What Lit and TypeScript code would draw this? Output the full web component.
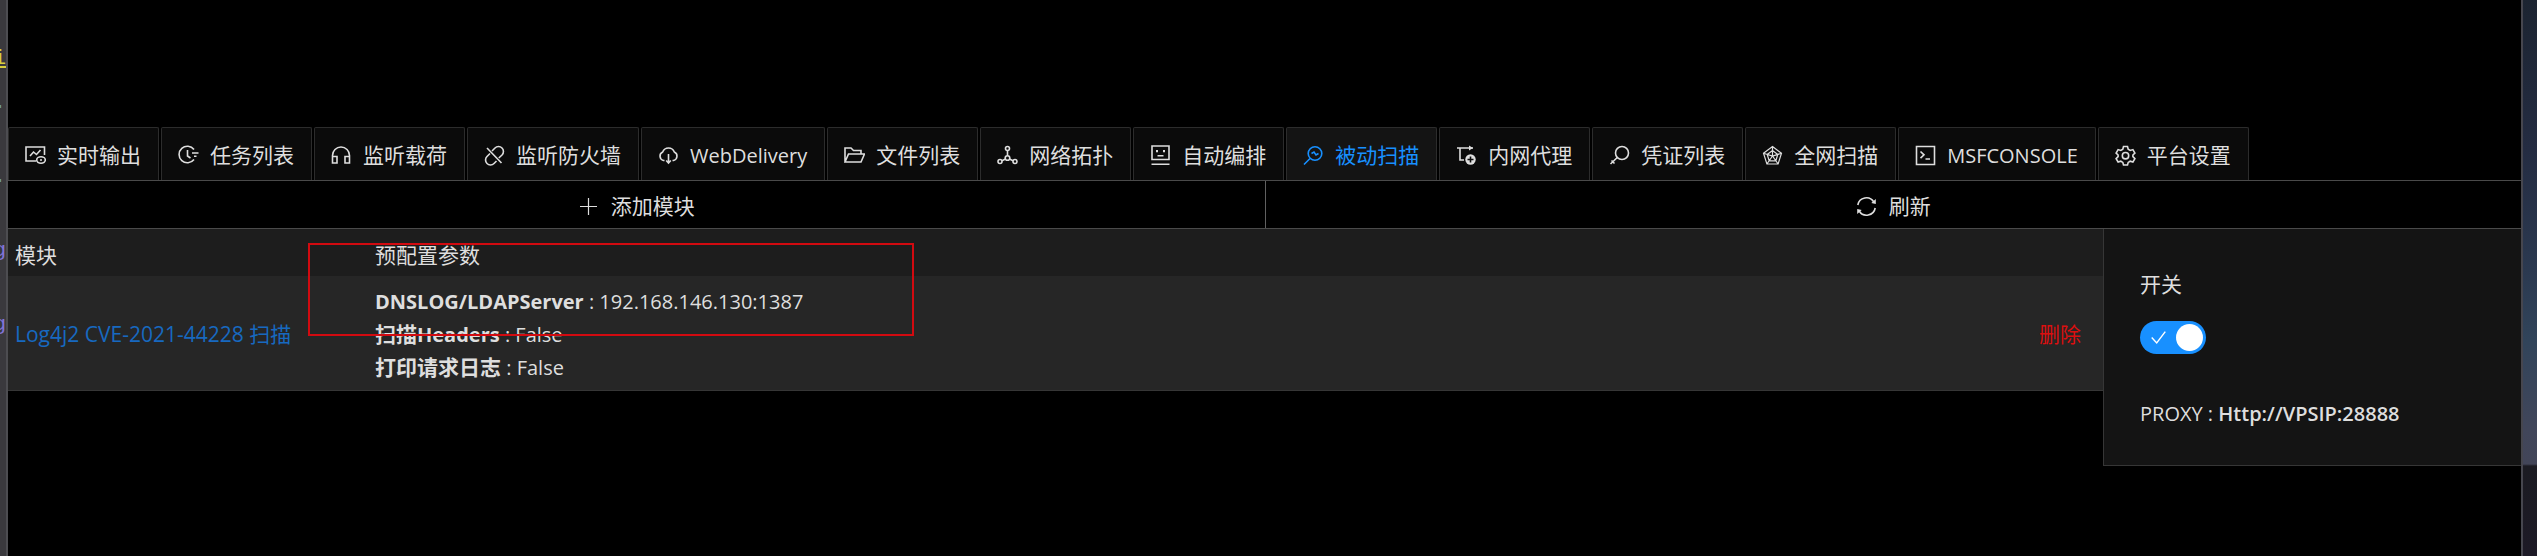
import { LitElement, html, svg, css } from "lit";
import { customElement, property, state } from "lit/decorators.js";
import { classMap } from "lit/directives/class-map.js";

const icons: Record<string, unknown> = {
  live: svg`<path d="M11 16H1V2h18.500v8M5 11l3.500-4 3 2.500L15.500 5"/><ellipse cx="16" cy="15" rx="4.300" ry="3.200"/><circle cx="16" cy="15" r="1" class="solid"/>`,
  task: svg`<path d="M16 4.500A8.300 8.300 0 1 0 16 14.500M9.500 5v6l3 2M14 8h6.500M16 11.300h2.500"/>`,
  headset: svg`<path d="M1.500 18v-7.500a8.500 8.500 0 0 1 17 0V18M1.500 11.500h4.500v6.500H1.500zM14 11.500h4.500v6.500H14z"/>`,
  firewall: svg`<path d="M3 3l14.500 15M8 6l3-3a4.800 4.800 0 0 1 7 7l-3.200 3M6 8.500L3 11.500a4.800 4.800 0 0 0 7 7l2.500-2.500"/>`,
  cloud: svg`<path d="M6.500 15.500H5.500a4.500 4.500 0 0 1-.8-8.500 6.200 6.200 0 0 1 11.600 0 4.500 4.500 0 0 1-.8 8.500h-1M10.500 9v9M8.200 15.500l2.300 2.500 2.300-2.500"/>`,
  folder: svg`<path d="M1 17V3h6l2.500 2.500H17V9M1 17l3.500-8H20.500l-3.500 8z"/>`,
  topology: svg`<circle cx="10.500" cy="3.500" r="2"/><circle cx="10.500" cy="13" r="2.300"/><circle cx="3" cy="16.500" r="2"/><circle cx="18" cy="16.500" r="2"/><path d="M10.500 5.500v5M8.500 14L5 15.700M12.500 14l3.500 1.700"/>`,
  robot: svg`<path d="M2 1h17v13.500H2zM1.500 19.200h18M7.500 10.800h6"/><path class="solid" d="M6 5h2v2.200H6zM13 5h2v2.200h-2z"/>`,
  scan: svg`<circle cx="12" cy="8.500" r="6.800"/><path d="M7 13.500L1 19.500M8.500 8.500l2.500-1.500 2 3 2.500-1.500"/>`,
  proxy: svg`<path d="M1 3h12M4 3v12h4M12 3h5"/><path class="solid" d="M13 .5l4 2.500-4 2.500z"/><circle cx="14.500" cy="14.500" r="5.200" class="solid"/><path class="cut" d="M14.500 11.500v6M11.500 14.500h6"/>`,
  key: svg`<circle cx="13" cy="8" r="6.500"/><path d="M8.300 12.500L1.500 19M2.500 15.500l3 3"/>`,
  radar: svg`<path class="fine" d="M10.500 1.500l9 6.800-3.400 10.700H4.900L1.500 8.300zM10.500 5.500l5.300 4-2 6.300H7.200l-2-6.300zM10.500 1.500V11M1.500 8.300l9 2.700 9-2.700M4.900 19l5.600-8 5.600 8"/>`,
  code: svg`<path d="M1.500 1.500h18v18h-18zM5.500 6.500l3.500 3.300-3.500 3.300M10.500 14h4.500"/>`,
  setting: svg`<path d="M8.500 1.500h4l.7 2.700 2 1.200 2.700-.8 2 3.400-2 2v1.600l2 2-2 3.400-2.700-.8-2 1.200-.7 2.600h-4l-.7-2.600-2-1.200-2.700.8-2-3.400 2-2V10l-2-2 2-3.400 2.700.8 2-1.200z"/><circle cx="10.500" cy="10.700" r="3.200"/>`,
  plus: svg`<path class="fine" d="M10.500 2v17M2 10.500h17"/>`,
  refresh: svg`<path d="M1.800 9a8.700 8.700 0 0 1 16-3M19.200 12a8.700 8.700 0 0 1-16 3"/><path class="solid" d="M19.800 3v5l-4.500-1zM1.200 18v-5l4.500 1z"/>`,
  check: svg`<path d="M3 10.500l5.500 6L18 4"/>`,
};

@customElement("ui-icon")
class UiIcon extends LitElement {
  @property() name = "";
  static styles = css`
    :host { display: block; flex: none; width: 21px; height: 21px; }
    svg { display: block; width: 100%; height: 100%; fill: none; stroke: currentColor; stroke-width: 1.6; }
    .solid { fill: currentColor; stroke: none; }
    .fine { stroke-width: 1.2; }
    .cut { stroke: #0b0b0b; }
  `;
  render() {
    return html`<svg viewBox="0 0 21 21" aria-hidden="true">${icons[this.name]}</svg>`;
  }
}

const tabs = [
  ["live", "实时输出"], ["task", "任务列表"], ["headset", "监听载荷"], ["firewall", "监听防火墙"],
  ["cloud", "WebDelivery"], ["folder", "文件列表"], ["topology", "网络拓扑"], ["robot", "自动编排"],
  ["scan", "被动扫描"], ["proxy", "内网代理"], ["key", "凭证列表"], ["radar", "全网扫描"],
  ["code", "MSFCONSOLE"], ["setting", "平台设置"],
];

@customElement("app-root")
class AppRoot extends LitElement {
  @state() active = "scan";
  @state() enabled = true;

  static styles = css`
    * { box-sizing: border-box; }
    :host {
      display: grid; grid-template-columns: 8px minmax(0, 1fr) 16px; min-height: 100vh;
      background: #000; color: #dedede;
      font: 21px/33px "Open Sans", "Noto Sans CJK SC", sans-serif;
    }
    button { font: inherit; color: inherit; background: none; border: 0; margin: 0; padding: 0; cursor: pointer; }
    .latin { font-size: 20px; }
    .gutter {
      background: #3a393d; border-right: 2px solid #4d4d51; overflow: hidden;
      display: flex; flex-direction: column; align-items: flex-end; color: #8174d8; font-family: "Liberation Mono", monospace;
    }
    .gutter span { flex: none; height: 74px; line-height: 74px; }
    .gutter .first { height: 66px; line-height: 33px; padding-top: 42px; color: #d8cf3c; text-decoration: underline; }
    .gutter .dot { color: #6f9a9c; }
    .edge {
      border-left: 2px solid #46464e;
      background: linear-gradient(#1c2431 0, #242c42 150px, #2b3950 270px, #31445a 340px, #41465a 430px, #424558 464px, #1b1b22 466px, #1d1a26 100%);
    }
    .console { height: 127px; }
    .tabs { display: flex; gap: 2px; border-bottom: 1px solid #4a4a4a; }
    .tab {
      display: flex; align-items: center; gap: 11px; height: 53px; padding: 2px 17px 0 16px; white-space: nowrap;
      background: #0b0b0b; border: 1px solid #2c2c2c; border-bottom: 0; border-radius: 2px 2px 0 0;
    }
    .tab.active { color: #1890ff; background: #141414; }
    .actions { display: grid; grid-template-columns: 1fr 1fr; border-bottom: 1px solid #4a4a4a; }
    .action { display: flex; align-items: center; justify-content: center; gap: 12px; height: 47px; padding-top: 3px; }
    .action + .action { border-left: 1px solid #606060; }
    .content { display: grid; grid-template-columns: minmax(0, 1fr) 418px; align-items: start; position: relative; }
    table { width: 100%; border-collapse: collapse; table-layout: fixed; background: #262626; }
    th { text-align: left; font-weight: 400; background: #1d1d1d; padding: 10px 7px 4px; }
    td { padding: 9px 7px 6px; border-bottom: 1px solid #363636; }
    .name { width: 360px; }
    .ops { width: 71px; }
    td.ops { padding-right: 0; }
    a { color: #1769c0; text-decoration: none; white-space: nowrap; }
    .remove { color: #dc0f0f; }
    b { font-weight: 700; }
    .mark { position: absolute; left: 300px; top: 14px; width: 606px; height: 93px; border: 2px solid #d20a10; pointer-events: none; }
    .panel {
      background: #141414; border-left: 1px solid #363636; border-bottom: 1px solid #363636;
      padding: 39px 36px 35px; display: flex; flex-direction: column; align-items: flex-start;
    }
    .switch { display: grid; align-items: center; margin: 20px 0 43px; }
    .switch > * { grid-area: 1 / 1; }
    .toggle { appearance: none; margin: 0; width: 66px; height: 33px; border-radius: 17px; background: #444; padding: 3px; cursor: pointer; }
    .toggle::before { content: ""; display: block; width: 27px; height: 27px; border-radius: 50%; background: #fff; }
    .toggle:checked { background: #1890ff; }
    .toggle:checked::before { margin-left: auto; }
    .tick { width: 19px; height: 19px; margin-left: 9px; color: #fff; pointer-events: none; }
    .proxy { white-space: nowrap; }
    .proxy b { font-weight: 600; }
  `;

  render() {
    return html`
      <div class="gutter" aria-hidden="true">
        <span class="first">i</span><span class="dot">.</span><span class="dot">.</span><span>g</span><span>g</span>
      </div>
      <main>
        <div class="console"></div>
        <div class="tabs" role="tablist">
          ${tabs.map(([id, label]) => html`
            <button role="tab" aria-selected=${this.active === id}
              class=${classMap({ tab: true, active: this.active === id })}
              @click=${() => (this.active = id)}>
              <ui-icon name=${id}></ui-icon><span class=${classMap({ latin: /^\w+$/.test(label) })}>${label}</span>
            </button>`)}
        </div>
        <div class="actions">
          <button class="action"><ui-icon name="plus"></ui-icon>添加模块</button>
          <button class="action"><ui-icon name="refresh"></ui-icon>刷新</button>
        </div>
        <div class="content">
          <table>
            <thead><tr><th class="name">模块</th><th>预配置参数</th><th class="ops"></th></tr></thead>
            <tbody>
              <tr>
                <td><a href="#module">Log4j2 CVE-2021-44228 扫描</a></td>
                <td>
                  <div><span class="latin"><b>DNSLOG/LDAPServer</b> : 192.168.146.130:1387</span></div>
                  <div><b>扫描<span class="latin">Headers</span></b><span class="latin"> : False</span></div>
                  <div><b>打印请求日志</b><span class="latin"> : False</span></div>
                </td>
                <td class="ops"><button class="remove">删除</button></td>
              </tr>
            </tbody>
          </table>
          <section class="panel">
            <label for="passive">开关</label>
            <span class="switch">
              <input id="passive" class="toggle" type="checkbox" role="switch" .checked=${this.enabled}
                @change=${(e: Event) => (this.enabled = (e.target as HTMLInputElement).checked)} />
              ${this.enabled ? html`<ui-icon class="tick" name="check"></ui-icon>` : ""}
            </span>
            <div class="proxy latin">PROXY : <b>Http://VPSIP:28888</b></div>
          </section>
          <div class="mark"></div>
        </div>
      </main>
      <div class="edge"></div>
    `;
  }
}
